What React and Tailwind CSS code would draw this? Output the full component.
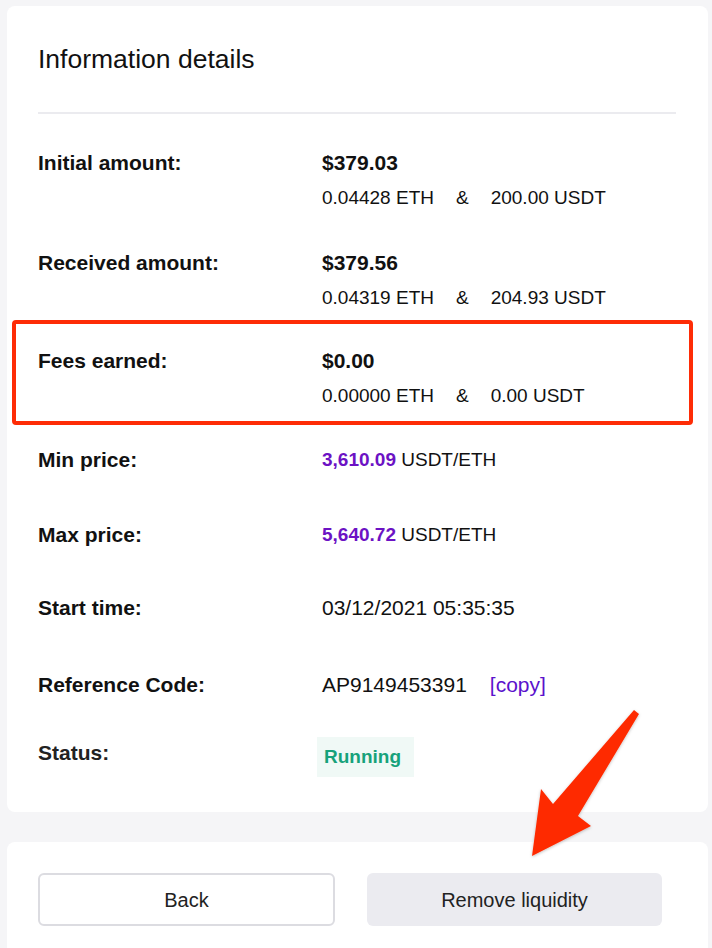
import React from 'react';

const font = { fontFamily: '"Liberation Sans", Arial, sans-serif' };

const Amounts = ({ total, eth, usdt }) => (
  <div>
    <p className="text-[21px] leading-[30px] font-bold text-[#111]">{total}</p>
    <div className="mt-[5px] flex gap-[22px] text-[19px] leading-[30px] text-[#111]">
      <span>{eth}</span>
      <span>&amp;</span>
      <span>{usdt}</span>
    </div>
  </div>
);

const Row = ({ label, children, height }) => (
  <div className={`flex items-start ${height || ''}`}>
    <div className="w-[284px] shrink-0 text-[21px] leading-[30px] font-bold text-[#111]">{label}</div>
    <div className="flex-1">{children}</div>
  </div>
);

const Price = ({ value }) => (
  <p className="text-[19px] leading-[30px] text-[#111]">
    <span className="font-bold text-[#6c12c4]">{value}</span> USDT/ETH
  </p>
);

const App = () => {
  return (
    <div className="relative w-[712px] h-[948px] overflow-hidden bg-[#f5f5f7] pt-[6px] pl-[7px] pr-[4px]" style={font}>
      {/* Main card */}
      <div className="bg-white rounded-[8px] pl-[31px] pr-[32px] pt-[35px] pb-[35px]">
        <h2 className="text-[26.5px] leading-[36px] text-[#111]">Information details</h2>
        <div className="mt-[35px] h-[2px] bg-[#ebebef]" />

        <div className="mt-[34px]">
          <div className="h-[100px]">
            <Row label="Initial amount:">
              <Amounts total="$379.03" eth="0.04428 ETH" usdt="200.00 USDT" />
            </Row>
          </div>
          <div className="h-[72px]">
            <Row label="Received amount:">
              <Amounts total="$379.56" eth="0.04319 ETH" usdt="204.93 USDT" />
            </Row>
          </div>

          {/* Highlighted fees */}
          <div className="-ml-[26px] -mr-[17px] border-4 border-[#fe2c06] rounded-[4px] pl-[22px] pt-[22px] pb-[10px]">
            <Row label="Fees earned:">
              <Amounts total="$0.00" eth="0.00000 ETH" usdt="0.00 USDT" />
            </Row>
          </div>

          <div className="mt-[20px] h-[75px]">
            <Row label="Min price:">
              <Price value="3,610.09" />
            </Row>
          </div>
          <div className="h-[73px]">
            <Row label="Max price:">
              <Price value="5,640.72" />
            </Row>
          </div>
          <div className="h-[77px]">
            <Row label="Start time:">
              <p className="text-[21px] leading-[30px] text-[#111]">03/12/2021 05:35:35</p>
            </Row>
          </div>
          <div className="h-[68px]">
            <Row label="Reference Code:">
              <p className="flex gap-[23px] text-[21px] leading-[30px] text-[#111]">
                <span>AP9149453391</span>
                <span className="text-[#5b12cc]">[copy]</span>
              </p>
            </Row>
          </div>
          <Row label={<span className="text-[#222]">Status:</span>}>
            <span className="-mt-[1px] -ml-[5px] inline-flex h-[40px] items-center pl-[7px] pr-[13px] bg-[#f0f9f6] text-[19px] font-bold text-[#17a27b]">
              Running
            </span>
          </Row>
        </div>
      </div>

      {/* Footer actions */}
      <div className="mt-[30px] h-[200px] bg-white rounded-t-[8px] pl-[31px] pt-[31px]">
        <div className="flex gap-[32px]">
          <button className="w-[297px] h-[53px] rounded-[6px] border-2 border-[#dcdce1] bg-white text-[20px] text-[#222]">
            Back
          </button>
          <button className="w-[295px] h-[53px] rounded-[6px] bg-[#ebebf0] text-[20px] text-[#222]">
            Remove liquidity
          </button>
        </div>
      </div>

      {/* Annotation arrow */}
      <svg className="absolute left-0 top-0 pointer-events-none" width="712" height="948" viewBox="0 0 712 948">
        <defs>
          <filter id="sh" x="-20%" y="-20%" width="140%" height="140%">
            <feDropShadow dx="0" dy="1" stdDeviation="1.5" floodColor="#000" floodOpacity="0.25" />
          </filter>
        </defs>
        <polygon
          points="634,710 639,714 578,816 591,826 532,856 541,789 553,804"
          fill="#fe2c06"
          filter="url(#sh)"
        />
      </svg>
    </div>
  );
};

export default App;
